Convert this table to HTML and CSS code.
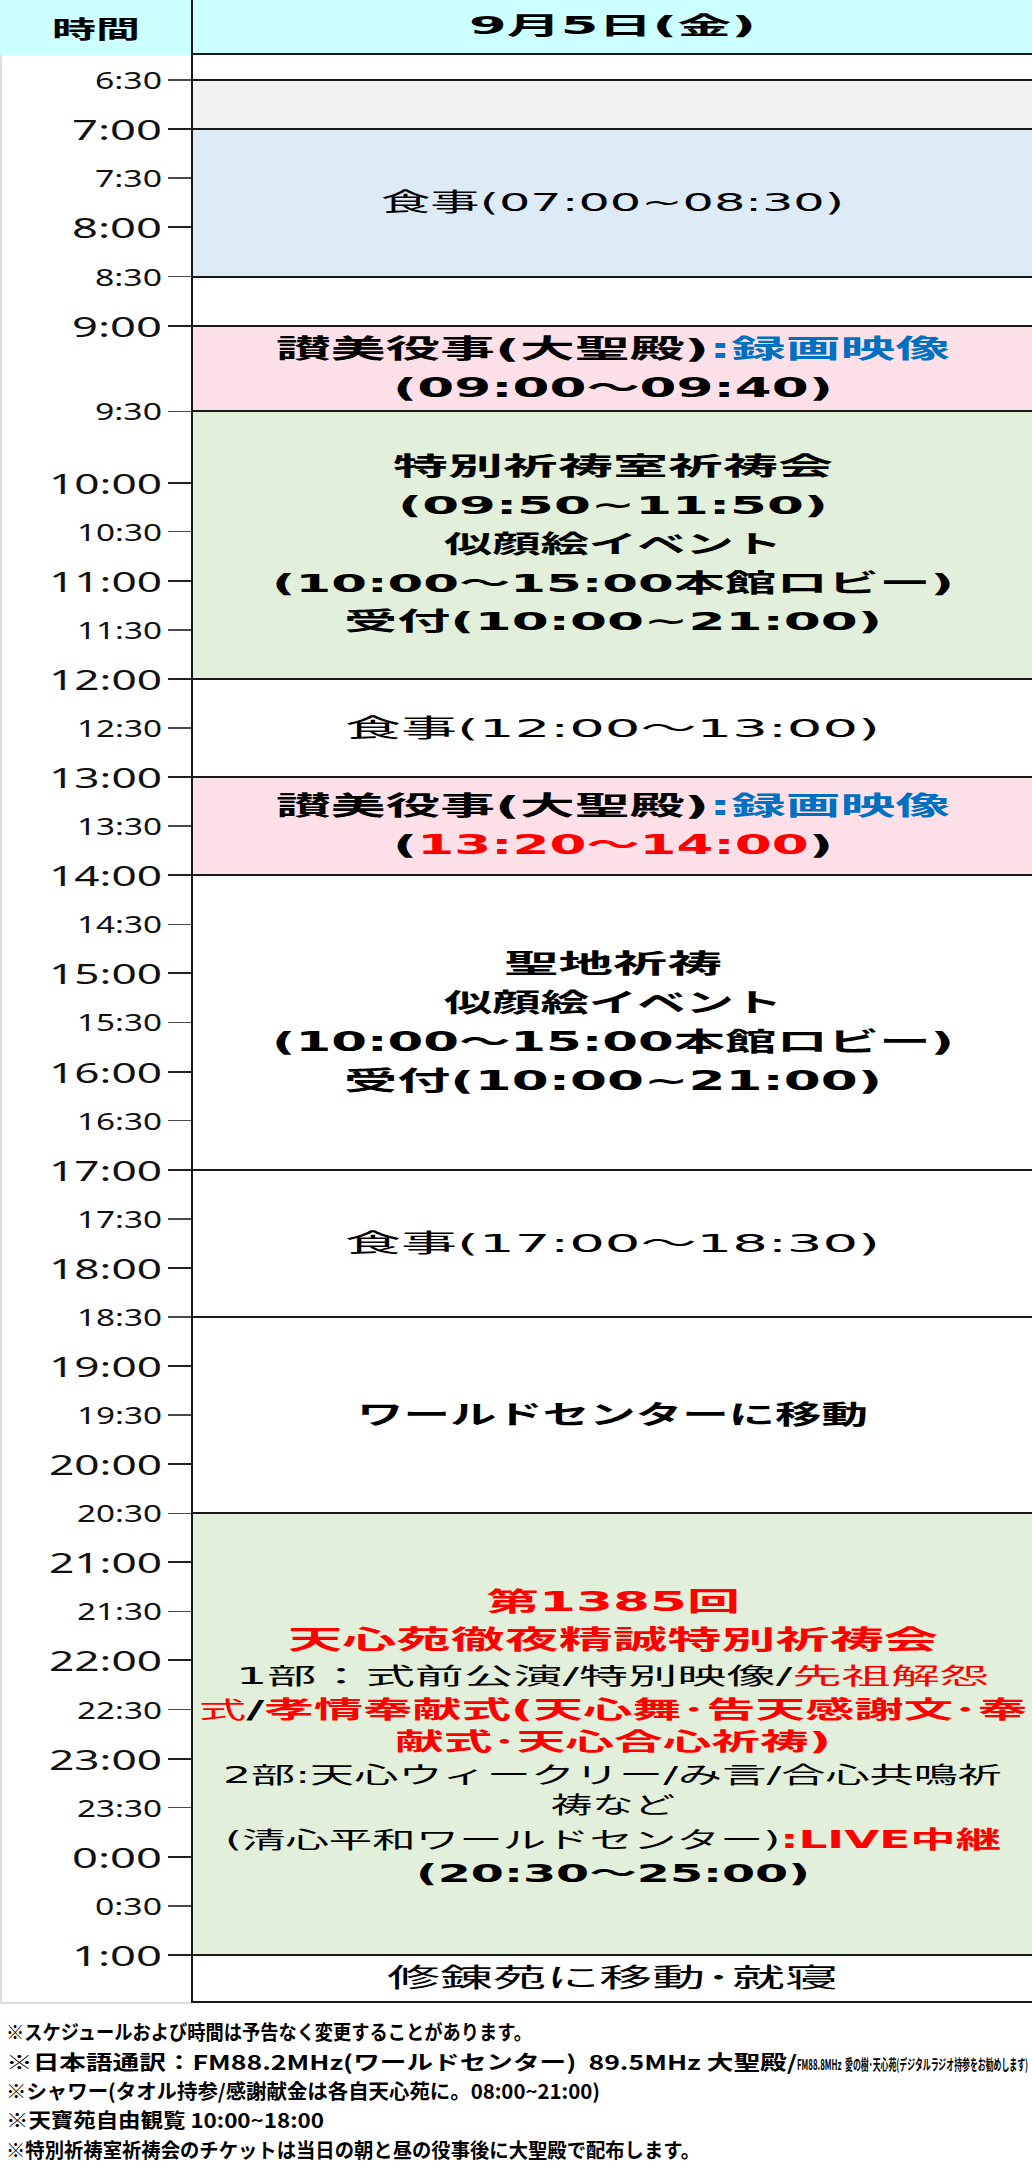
FILE: index.html
```html
<!DOCTYPE html>
<html lang="ja">
<head>
<meta charset="utf-8">
<title>9月5日(金) スケジュール</title>
<link rel="stylesheet" href="styles.css">
</head>
<body>
<div class="table">
  <div class="times">
    <div class="times-head"><span class="fit" data-w="88">時間</span></div>
    <div class="times-body">
      <div class="tick s-a hf"><div class="mark"><span class="lab fit" data-w="67">6:30</span><i class="rule"></i></div></div>
      <div class="tick s-a hr"><div class="mark"><span class="lab fit" data-w="90">7:00</span><i class="rule"></i></div></div>
      <div class="tick s-a hf"><div class="mark"><span class="lab fit" data-w="67">7:30</span><i class="rule"></i></div></div>
      <div class="tick s-a hr"><div class="mark"><span class="lab fit" data-w="90">8:00</span><i class="rule"></i></div></div>
      <div class="tick s-a hf"><div class="mark"><span class="lab fit" data-w="67">8:30</span><i class="rule"></i></div></div>
      <div class="tick s-b hr"><div class="mark"><span class="lab fit" data-w="90">9:00</span><i class="rule"></i></div></div>
      <div class="tick s-c hf"><div class="mark"><span class="lab fit" data-w="67">9:30</span><i class="rule"></i></div></div>
      <div class="tick hr"><div class="mark"><span class="lab fit" data-w="113">10:00</span><i class="rule"></i></div></div>
      <div class="tick hf"><div class="mark"><span class="lab fit" data-w="85">10:30</span><i class="rule"></i></div></div>
      <div class="tick hr"><div class="mark"><span class="lab fit" data-w="113">11:00</span><i class="rule"></i></div></div>
      <div class="tick hf"><div class="mark"><span class="lab fit" data-w="85">11:30</span><i class="rule"></i></div></div>
      <div class="tick hr"><div class="mark"><span class="lab fit" data-w="113">12:00</span><i class="rule"></i></div></div>
      <div class="tick hf"><div class="mark"><span class="lab fit" data-w="85">12:30</span><i class="rule"></i></div></div>
      <div class="tick hr"><div class="mark"><span class="lab fit" data-w="113">13:00</span><i class="rule"></i></div></div>
      <div class="tick hf"><div class="mark"><span class="lab fit" data-w="85">13:30</span><i class="rule"></i></div></div>
      <div class="tick hr"><div class="mark"><span class="lab fit" data-w="113">14:00</span><i class="rule"></i></div></div>
      <div class="tick hf"><div class="mark"><span class="lab fit" data-w="85">14:30</span><i class="rule"></i></div></div>
      <div class="tick hr"><div class="mark"><span class="lab fit" data-w="113">15:00</span><i class="rule"></i></div></div>
      <div class="tick hf"><div class="mark"><span class="lab fit" data-w="85">15:30</span><i class="rule"></i></div></div>
      <div class="tick hr"><div class="mark"><span class="lab fit" data-w="113">16:00</span><i class="rule"></i></div></div>
      <div class="tick hf"><div class="mark"><span class="lab fit" data-w="85">16:30</span><i class="rule"></i></div></div>
      <div class="tick hr"><div class="mark"><span class="lab fit" data-w="113">17:00</span><i class="rule"></i></div></div>
      <div class="tick hf"><div class="mark"><span class="lab fit" data-w="85">17:30</span><i class="rule"></i></div></div>
      <div class="tick hr"><div class="mark"><span class="lab fit" data-w="113">18:00</span><i class="rule"></i></div></div>
      <div class="tick hf"><div class="mark"><span class="lab fit" data-w="85">18:30</span><i class="rule"></i></div></div>
      <div class="tick hr"><div class="mark"><span class="lab fit" data-w="113">19:00</span><i class="rule"></i></div></div>
      <div class="tick hf"><div class="mark"><span class="lab fit" data-w="85">19:30</span><i class="rule"></i></div></div>
      <div class="tick hr"><div class="mark"><span class="lab fit" data-w="113">20:00</span><i class="rule"></i></div></div>
      <div class="tick hf"><div class="mark"><span class="lab fit" data-w="85">20:30</span><i class="rule"></i></div></div>
      <div class="tick hr"><div class="mark"><span class="lab fit" data-w="113">21:00</span><i class="rule"></i></div></div>
      <div class="tick hf"><div class="mark"><span class="lab fit" data-w="85">21:30</span><i class="rule"></i></div></div>
      <div class="tick hr"><div class="mark"><span class="lab fit" data-w="113">22:00</span><i class="rule"></i></div></div>
      <div class="tick hf"><div class="mark"><span class="lab fit" data-w="85">22:30</span><i class="rule"></i></div></div>
      <div class="tick hr"><div class="mark"><span class="lab fit" data-w="113">23:00</span><i class="rule"></i></div></div>
      <div class="tick hf"><div class="mark"><span class="lab fit" data-w="85">23:30</span><i class="rule"></i></div></div>
      <div class="tick hr"><div class="mark"><span class="lab fit" data-w="90">0:00</span><i class="rule"></i></div></div>
      <div class="tick hf"><div class="mark"><span class="lab fit" data-w="67">0:30</span><i class="rule"></i></div></div>
      <div class="tick s-z hr"><div class="mark"><span class="lab fit" data-w="90">1:00</span><i class="rule"></i></div></div>
    </div>
  </div>

  <div class="day">
    <div class="cell day-head b"><div class="ln"><span class="fit" data-w="287">9月5日(金)</span></div></div>
    <div class="cell r-pre"></div>
    <div class="cell r-gray"></div>
    <div class="cell r-meal1 meal"><div class="ln"><span class="fit" data-w="463">食事(07:00~08:30)</span></div></div>
    <div class="cell r-s1"></div>
    <div class="cell r-pink1 pink b">
      <div class="ln"><span class="fit" data-w="674">讃美役事(大聖殿)<span class="blue">:録画映像</span></span></div>
      <div class="ln"><span class="fit" data-w="440">(09:00～09:40)</span></div>
    </div>
    <div class="cell r-green1 green b">
      <div class="ln"><span class="fit" data-w="440">特別祈祷室祈祷会</span></div>
      <div class="ln"><span class="fit" data-w="430">(09:50~11:50)</span></div>
      <div class="ln"><span class="fit" data-w="338">似顔絵イベント</span></div>
      <div class="ln"><span class="fit" data-w="682">(10:00～15:00本館ロビー)</span></div>
      <div class="ln"><span class="fit" data-w="538">受付(10:00~21:00)</span></div>
    </div>
    <div class="cell r-meal2 meal"><div class="ln"><span class="fit" data-w="535">食事(12:00～13:00)</span></div></div>
    <div class="cell r-pink2 pink b">
      <div class="ln"><span class="fit" data-w="674">讃美役事(大聖殿)<span class="blue">:録画映像</span></span></div>
      <div class="ln"><span class="fit" data-w="440">(<span class="red">13:20～14:00</span>)</span></div>
    </div>
    <div class="cell r-holy b">
      <div class="ln"><span class="fit" data-w="218">聖地祈祷</span></div>
      <div class="ln"><span class="fit" data-w="338">似顔絵イベント</span></div>
      <div class="ln"><span class="fit" data-w="682">(10:00～15:00本館ロビー)</span></div>
      <div class="ln"><span class="fit" data-w="538">受付(10:00~21:00)</span></div>
    </div>
    <div class="cell r-meal3 meal"><div class="ln"><span class="fit" data-w="535">食事(17:00～18:30)</span></div></div>
    <div class="cell r-move b"><div class="ln"><span class="fit" data-w="511">ワールドセンターに移動</span></div></div>
    <div class="cell r-green2 green">
      <div class="ln g1 b red"><span class="fit" data-w="254">第1385回</span></div>
      <div class="ln g2 b red"><span class="fit" data-w="650">天心苑徹夜精誠特別祈祷会</span></div>
      <div class="ln g3"><span class="fit" data-w="753">1部：式前公演/特別映像/<span class="red">先祖解怨</span></span></div>
      <div class="ln g4"><span class="fit" data-w="828"><span class="red">式</span><b>/</b><b class="red">孝情奉献式(天心舞･告天感謝文･奉</b></span></div>
      <div class="ln g5 b red"><span class="fit" data-w="436">献式･天心合心祈祷)</span></div>
      <div class="ln g6"><span class="fit" data-w="779">2部:天心ウィークリー/み言/合心共鳴祈</span></div>
      <div class="ln g7"><span class="fit" data-w="124">祷など</span></div>
      <div class="ln g8"><span class="fit" data-w="776">(清心平和ワールドセンター)<b class="red">:LIVE中継</b></span></div>
      <div class="ln g9 b"><span class="fit" data-w="394">(20:30～25:00)</span></div>
    </div>
    <div class="cell r-last"><div class="ln"><span class="fit" data-w="451">修錬苑に移動･就寝</span></div></div>
  </div>
</div>

<div class="notes">
  <p class="note"><span class="fit" data-w="526">※スケジュールおよび時間は予告なく変更することがあります。</span></p>
  <p class="note"><span class="fit" data-w="791">※日本語通訳：FM88.2MHz(ワールドセンター)&nbsp; 89.5MHz 大聖殿/</span><span class="fit small" data-w="231">FM88.8MHz&nbsp; 愛の樹･天心苑(デジタルラジオ持参をお勧めします)</span></p>
  <p class="note"><span class="fit" data-w="594">※シャワー(タオル持参/感謝献金は各自天心苑に。08:00~21:00)</span></p>
  <p class="note"><span class="fit" data-w="318">※天寶苑自由観覧 10:00~18:00</span></p>
  <p class="note"><span class="fit" data-w="694">※特別祈祷室祈祷会のチケットは当日の朝と昼の役事後に大聖殿で配布します。</span></p>
</div>
<script src="script.js"></script>
</body>
</html>
```

FILE: styles.css
```css
* {
  box-sizing: border-box;
  margin: 0;
  padding: 0;
}

html,
body {
  background: #ffffff;
}

body {
  width: 1032px;
  font-family: "Noto Sans CJK JP", sans-serif;
  color: #000000;
}

.fit {
  display: inline-block;
  white-space: nowrap;
  transform-origin: 0 50%;
}

/* ---------- table ---------- */
.table {
  display: flex;
  align-items: flex-start;
}

.times {
  width: 191px;
  flex: none;
}

.times-head {
  height: 55px;
  background: #ccffff;
  display: flex;
  align-items: center;
  justify-content: center;
  font-weight: 700;
  font-size: 24px;
  line-height: 30px;
}

.times-body {
  border-left: 2px solid #dedede;
  border-bottom: 2px solid #dedede;
  padding-top: 24.8px;
}

.tick {
  display: flow-root;
  height: 49.08px;
}

.tick.s-a {
  height: 49.2px;
}

.tick.s-b {
  height: 85.7px;
}

.tick.s-c {
  height: 71.2px;
}

.tick.s-z {
  height: 47px;
}

.mark {
  height: 30px;
  margin-top: -15px;
  display: flex;
  align-items: center;
  justify-content: flex-end;
}

.lab {
  font-family: "Noto Sans", sans-serif;
  line-height: 30px;
  color: #111111;
}

.hr .lab {
  font-size: 28px;
}

.hf .lab {
  font-size: 23px;
}

.rule {
  flex: none;
  width: 23px;
  height: 2px;
  margin-left: 6px;
  background: #222222;
}

.hf .rule {
  height: 1.5px;
  background: #4a4a4a;
}

/* ---------- day column ---------- */
.day {
  flex: 1;
  border-left: 2px solid #1a1a1a;
  font-family: "DejaVu Sans", "Noto Sans CJK JP", sans-serif;
  font-size: 25px;
}

.cell {
  border-bottom: 2px solid #1a1a1a;
  display: flex;
  flex-direction: column;
  justify-content: center;
}

.ln {
  text-align: center;
  white-space: nowrap;
  height: 39px;
  line-height: 39px;
}

.b {
  font-weight: 700;
}

.day-head {
  height: 55px;
  background: #ccffff;
  font-size: 24px;
}

.r-pre {
  height: 25.8px;
}

.r-gray {
  height: 49.2px;
  background: #f2f2f2;
}

.r-meal1 {
  height: 147.6px;
  background: #ddebf7;
}

.r-s1 {
  height: 49.2px;
}

.r-pink1 {
  height: 85.7px;
}

.r-green1 {
  height: 267.5px;
}

.r-green1 .ln {
  height: 38.75px;
  line-height: 38.75px;
}

.r-meal2 {
  height: 98.16px;
}

.r-pink2 {
  height: 98.16px;
}

.r-holy {
  height: 294.5px;
}

.r-meal3 {
  height: 147.24px;
}

.r-move {
  height: 196.3px;
}

.r-green2 {
  height: 441.7px;
}

.r-last {
  height: 47px;
  font-size: 26px;
}

.meal {
  font-size: 25px;
}

.pink {
  background: #fddfe8;
  font-size: 26px;
}

.green {
  background: #e2efda;
}

.r-holy,
.r-move {
  font-size: 26px;
}

.r-green1 {
  font-size: 25px;
}

.blue {
  color: #0070c0;
}

.red {
  color: #ff0000;
}

/* big night session lines */
.r-green2 .ln {
  font-size: 23px;
}

.r-green2 .g1 {
  height: 38px;
  line-height: 38px;
  font-size: 26px;
}

.r-green2 .g2 {
  height: 38px;
  line-height: 38px;
  font-size: 26px;
}

.r-green2 .g3 {
  height: 35px;
  line-height: 35px;
}

.r-green2 .g4 {
  height: 32px;
  line-height: 32px;
  font-size: 24px;
}

.r-green2 .g4 .red:first-child {
  font-size: 23px;
}

.r-green2 .g5 {
  height: 32px;
  line-height: 32px;
  font-size: 24px;
}

.r-green2 .g6 {
  height: 34px;
  line-height: 34px;
}

.r-green2 .g7 {
  height: 27px;
  line-height: 27px;
}

.r-green2 .g8 {
  height: 43px;
  line-height: 43px;
}

.r-green2 .g8 b {
  font-size: 24px;
}

.r-green2 .g9 {
  height: 24px;
  line-height: 24px;
  font-size: 25px;
}

/* ---------- notes ---------- */
.notes {
  padding: 13.5px 0 0 6px;
  font-weight: 700;
  font-size: 20px;
  line-height: 29.35px;
}

.note {
  white-space: nowrap;
}

.note .small {
  font-size: 14.5px;
  line-height: 1;
}
```

FILE: script.js
```js
function fitAll() {
  var items = document.querySelectorAll('.fit');
  items.forEach(function (el) {
    el.style.transform = '';
    el.style.marginRight = '';
  });
  items.forEach(function (el) {
    var w = el.getBoundingClientRect().width;
    var t = parseFloat(el.getAttribute('data-w'));
    if (!w || !t) return;
    el.style.transform = 'scaleX(' + (t / w).toFixed(4) + ')';
    el.style.marginRight = (t - w).toFixed(2) + 'px';
  });
}
fitAll();
if (document.fonts && document.fonts.ready) {
  document.fonts.ready.then(fitAll);
}
```
